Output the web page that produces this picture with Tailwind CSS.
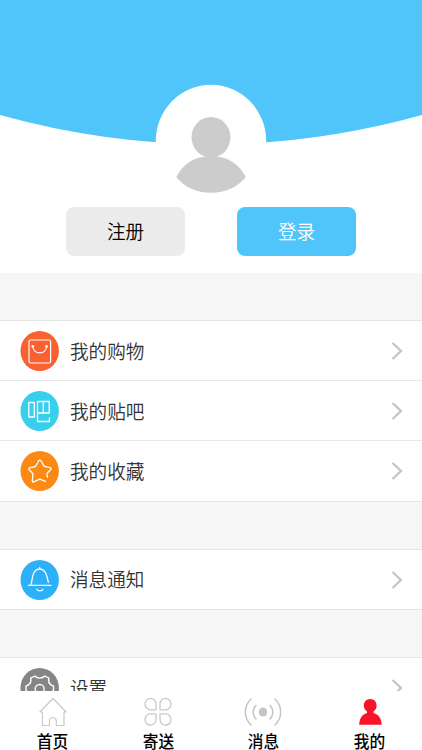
<!DOCTYPE html>
<html lang="zh-CN">
<head>
<meta charset="utf-8">
<meta name="viewport" content="width=device-width, initial-scale=1">
<title>我的</title>
<script src="https://cdn.jsdelivr.net/npm/@tailwindcss/browser@4"></script>
</head>
<body class="bg-white font-['Noto_Sans_CJK_SC',sans-serif]">
<div class="flex h-[750px] w-[422px] flex-col overflow-hidden bg-white">
  <main class="min-h-0 flex-1 overflow-hidden bg-[#f6f6f6]">
    <header class="h-[273px] bg-white">
      <svg class="block h-[207px] w-full" viewBox="0 0 422 207">
        <path d="M0 0H422V115Q211 173.500 0 115Z" fill="#50c5f9"/>
        <ellipse cx="211" cy="141" rx="55.200" ry="56.200" fill="#fff"/>
        <g fill="#ccc">
          <ellipse cx="211" cy="137.300" rx="19.500" ry="20.300"/>
          <path d="M176.300 177.300C182 164.500 195 156 211 156S240 164.500 245.800 177.300C237 187.500 225.500 192.800 211 192.800S185 187.500 176.300 177.300Z"/>
        </g>
      </svg>
      <div class="flex justify-between pr-[66px] pl-[66px]">
        <button class="h-[49px] w-[119px] rounded-lg bg-[#ebebeb] text-black"><span class="-mt-[2px] block scale-x-95 text-[19.500px] leading-[49px] font-[350]">注册</span></button>
        <button class="h-[49px] w-[119px] rounded-lg bg-[#50c5f9] text-white"><span class="-mt-[2px] block scale-x-95 text-[19.500px] leading-[49px] font-[350]">登录</span></button>
      </div>
    </header>

    <ul class="mt-[47px] border-y border-[#e5e5e5] bg-white font-[350] text-[#333]">
      <li class="flex h-[60px] items-center border-b border-[#e8e8e8] pr-[19px] pl-[20px]">
        <svg class="h-[40px] w-[39px] shrink-0" viewBox="0 0 39 40" fill="none" stroke="#fff" stroke-width="1.200" stroke-linecap="round" stroke-linejoin="round"><ellipse cx="19.700" cy="20" rx="19.200" ry="20" fill="#fa6130" stroke="none"/><rect x="9" y="9" width="21.600" height="23" rx="1.500"/><path d="M12.800 15.500C13.500 24 26 24 26.600 15.500"/><g fill="#fff" stroke="none"><circle cx="12.800" cy="15.200" r="1.300"/><circle cx="26.600" cy="15.200" r="1.300"/></g></svg>
        <span class="ml-[11px] flex-1 origin-left scale-x-95 text-[19.600px] leading-[30px]">我的购物</span>
        <svg class="h-[18px] w-[12px]" viewBox="0 0 12 18" fill="none" stroke="#c4c4c7" stroke-width="2.200"><path d="M1.500 1L10 9L1.500 17"/></svg>
      </li>
      <li class="flex h-[60px] items-center border-b border-[#e8e8e8] pr-[19px] pl-[20px]">
        <svg class="h-[40px] w-[39px] shrink-0" viewBox="0 0 39 40" fill="none" stroke="#fff" stroke-width="1.300" stroke-linejoin="round"><ellipse cx="19.700" cy="20" rx="19.200" ry="20" fill="#37cfec" stroke="none"/><path d="M8.800 11.500H14.300V26H8.800ZM17.500 10.500H29.200V22H17.500ZM23.300 10.500V22M17.500 22V30.500H29.500V26.500"/></svg>
        <span class="ml-[11px] flex-1 origin-left scale-x-95 text-[19.600px] leading-[30px]">我的贴吧</span>
        <svg class="h-[18px] w-[12px]" viewBox="0 0 12 18" fill="none" stroke="#c4c4c7" stroke-width="2.200"><path d="M1.500 1L10 9L1.500 17"/></svg>
      </li>
      <li class="flex h-[60px] items-center pr-[19px] pl-[20px]">
        <svg class="h-[40px] w-[39px] shrink-0" viewBox="0 0 39 40" fill="none" stroke="#fff" stroke-width="1.300" stroke-linecap="round" stroke-linejoin="round"><ellipse cx="19.700" cy="20" rx="19.200" ry="20" fill="#fd8915" stroke="none"/><path d="M27.400 26L26.900 22.500L31 18.200Q31.300 17 30 16.700L24.300 15.300L20.800 9.500Q19.800 8.700 18.900 9.500L15.500 15.500L9.500 16.800Q8.300 17.500 9 18.500L13 22.700L12.300 30.300Q12.500 31.400 13.700 30.800L19.800 28.200L25.500 30.300"/></svg>
        <span class="-mt-px ml-[11px] flex-1 origin-left scale-x-95 text-[19.600px] leading-[30px]">我的收藏</span>
        <svg class="h-[18px] w-[12px]" viewBox="0 0 12 18" fill="none" stroke="#c4c4c7" stroke-width="2.200"><path d="M1.500 1L10 9L1.500 17"/></svg>
      </li>
    </ul>

    <ul class="mt-[47px] border-y border-[#e5e5e5] bg-white font-[350] text-[#333]">
      <li class="flex h-[59px] items-center pr-[19px] pl-[20px]">
        <svg class="h-[40px] w-[39px] shrink-0" viewBox="0 0 39 40" fill="none" stroke="#fff" stroke-width="1.300" stroke-linecap="round" stroke-linejoin="round"><ellipse cx="19.700" cy="20" rx="19.200" ry="20" fill="#2cb1f8" stroke="none"/><path d="M8.500 25.300H31M10.700 25C12.500 22 11.500 17 14 12.500C17 7.800 22.500 7.800 25.300 12.500C27.300 16 27.500 19 28.300 22.300M19.700 8.500V7.600M16.800 29.300C18 31.400 21.800 31.400 23 29.300"/></svg>
        <span class="-mt-px ml-[11px] flex-1 origin-left scale-x-95 text-[19.600px] leading-[30px]">消息通知</span>
        <svg class="h-[18px] w-[12px]" viewBox="0 0 12 18" fill="none" stroke="#c4c4c7" stroke-width="2.200"><path d="M1.500 1L10 9L1.500 17"/></svg>
      </li>
    </ul>

    <ul class="mt-[47px] border-y border-[#e5e5e5] bg-white font-[350] text-[#333]">
      <li class="flex h-[60px] items-center pr-[19px] pl-[20px]">
        <svg class="h-[40px] w-[39px] shrink-0" viewBox="0 0 39 40" fill="none" stroke="#fff" stroke-width="1.400" stroke-linejoin="round"><ellipse cx="19.700" cy="20" rx="19.200" ry="20" fill="#858585" stroke="none"/><path d="M14.800 8C17 10.800 22.500 10.800 24.700 8L28.800 10.200C28 14.500 30 17 33.500 18V23C30 24 28 27.500 29 31L25 33.500C22.500 30.500 17 30.500 14.500 33.500L10.500 31C11.500 27.500 9.500 24 6 23V18C9.500 17 11.500 14.500 10.700 10.200Z"/><circle cx="19.700" cy="21" r="4.500"/></svg>
        <span class="-mt-px ml-[11px] flex-1 origin-left scale-x-95 text-[19.600px] leading-[30px]">设置</span>
        <svg class="h-[18px] w-[12px]" viewBox="0 0 12 18" fill="none" stroke="#c4c4c7" stroke-width="2.200"><path d="M1.500 1L10 9L1.500 17"/></svg>
      </li>
    </ul>
  </main>

  <nav class="grid h-[59px] shrink-0 grid-cols-4 bg-white text-[16.500px] leading-[18px] font-medium text-black">
    <a class="flex flex-col items-center pt-[6px]">
      <svg class="h-[30px] w-[40px]" viewBox="0 0 40 30" fill="none" stroke="#c9c9c9" stroke-width="1.200" stroke-linejoin="round"><path d="M20 1.500L6.800 15H9.500V28.500H16.500V23.500Q16.500 20.500 19.700 20.500T23.300 23.500V28.500H31V15H33.200Z"/></svg>
      <span class="mt-[5px] block scale-x-95">首页</span>
    </a>
    <a class="flex flex-col items-center pt-[6px]">
      <svg class="h-[30px] w-[40px]" viewBox="0 0 40 30" fill="none" stroke="#c9c9c9" stroke-width="1.300" stroke-linejoin="round"><path d="M18 12.800H12.500A5.500 5.700 0 1 1 18 7ZM22 12.800H27.500A5.500 5.700 0 1 0 22 7ZM18 16.800H12.500A5.500 5.700 0 1 0 18 22.600ZM22 16.800H27.500A5.500 5.700 0 1 1 22 22.600Z"/></svg>
      <span class="mt-[5px] block scale-x-95">寄送</span>
    </a>
    <a class="flex flex-col items-center pt-[6px]">
      <svg class="h-[30px] w-[40px]" viewBox="0 0 40 30" fill="none" stroke="#c5c5c5" stroke-width="1.500" stroke-linecap="round"><ellipse cx="19" cy="15" rx="4.200" ry="4.600" fill="#c5c5c5" stroke="none"/><path d="M12 8.500C8.300 12 8.300 18.500 12 22M26 8.500C29.700 12 29.700 18.500 26 22M7 2C-.5 9 -.5 21 7 28M31 2C38.500 9 38.500 21 31 28"/></svg>
      <span class="mt-[5px] block scale-x-95">消息</span>
    </a>
    <a class="flex flex-col items-center pt-[6px]">
      <svg class="h-[30px] w-[40px]" viewBox="0 0 40 30" fill="#f8152a"><path d="M21.200 2C25 2 27.600 4.800 27.600 8.500C27.600 11 26.500 13 24.500 14.500V16C29.500 17.500 32.500 21 32.700 27.800H10.200C10.500 21 13.200 17.500 18 16V14.500C16 13 14.800 11 14.800 8.500C14.800 4.800 17.400 2 21.200 2Z"/></svg>
      <span class="mt-[5px] block scale-x-95">我的</span>
    </a>
  </nav>
</div>
</body>
</html>
